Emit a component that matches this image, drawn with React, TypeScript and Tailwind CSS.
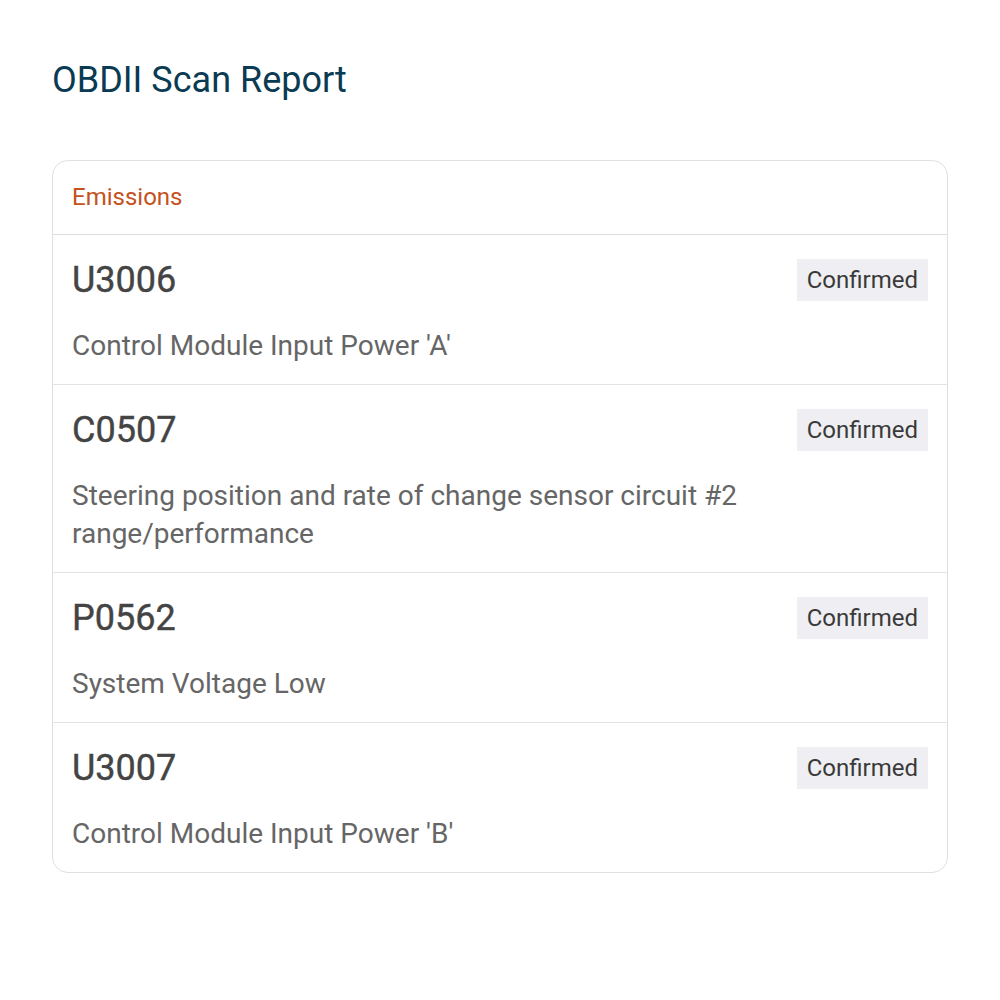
const codes = [
  { code: "U3006", desc: "Control Module Input Power 'A'" },
  { code: "C0507", desc: "Steering position and rate of change sensor circuit #2 range/performance" },
  { code: "P0562", desc: "System Voltage Low" },
  { code: "U3007", desc: "Control Module Input Power 'B'" },
]

export default function App() {
  return (
    <div className="min-h-screen bg-white px-[52px] pt-[58px] font-['Roboto',sans-serif]">
      <h1 className="text-[36px] leading-[44px] text-[#0b3a53]">OBDII Scan Report</h1>

      <div className="mt-[58px] rounded-[16px] border border-[#e0e0e0]">
        <div className="border-b border-[#dcdcdc] px-[19px] pt-[21px] pb-[22px] text-[24px] leading-[30px] text-[#c4521c]">
          Emissions
        </div>
        {codes.map((item, i) => (
          <div
            key={item.code}
            className={`px-[19px] pt-6 pb-[19px] ${i < codes.length - 1 ? "border-b border-[#e3e3e3]" : ""}`}
          >
            <div className="flex h-[42px] items-center justify-between">
              <div className="text-[36px] leading-[42px] text-[#444444] [-webkit-text-stroke:0.4px_#444444]">
                {item.code}
              </div>
              <span className="bg-[#efeff3] px-[10px] text-[24px] leading-[42px] text-[#3a3a3a]">Confirmed</span>
            </div>
            <p className="mt-[26px] text-[28px] leading-[38px] text-[#666666]">{item.desc}</p>
          </div>
        ))}
      </div>
    </div>
  )
}
